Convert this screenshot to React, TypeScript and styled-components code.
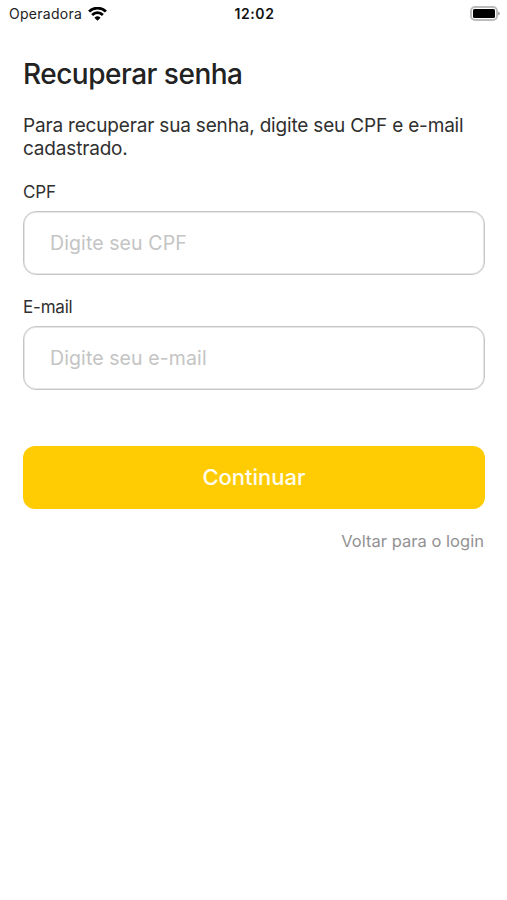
import React from "react";
import styled, { createGlobalStyle } from "styled-components";

const GlobalStyle = createGlobalStyle`
  * { box-sizing: border-box; }
  body { margin: 0; background: #fff; font-family: Inter, "Liberation Sans", sans-serif; color: #303030; }
`;

const Screen = styled.div`
  min-height: 900px;
  background: #fff;
`;

const StatusBar = styled.header`
  height: 28px;
  padding: 0 7px 0 9px;
  display: grid;
  grid-template-columns: 1fr auto 1fr;
  align-items: center;
  font-size: 14px;
  line-height: 28px;
  color: #222;
`;

const Carrier = styled.div`
  display: flex;
  align-items: center;
  gap: 6px;
  letter-spacing: 0.28px;
`;

const Clock = styled.div`
  font-weight: 600;
  letter-spacing: 0.6px;
  color: #111;
`;

const Battery = styled.div`
  display: flex;
  justify-content: flex-end;
  padding-bottom: 2px;
`;

const Form = styled.main`
  padding: 28px 22px 0 23px;
  display: flex;
  flex-direction: column;
`;

const Title = styled.h1`
  margin: 0;
  font-size: 28px;
  line-height: 36px;
  font-weight: 500;
  letter-spacing: -0.5px;
  color: #222;
`;

const Lead = styled.p`
  margin: 22px 0 0;
  font-size: 19px;
  line-height: 23px;
  letter-spacing: -0.18px;
`;

const Field = styled.div`
  margin-top: 21px;
  display: flex;
  flex-direction: column;
`;

const Label = styled.label`
  font-size: 17px;
  line-height: 22px;
  margin-bottom: 8px;
  letter-spacing: -0.2px;
`;

const Input = styled.input`
  width: 100%;
  height: 64px;
  border: 1px solid #c6c6c6;
  border-radius: 13px;
  box-shadow: inset 0 0 0 1px #e6e6e6;
  padding: 0 26px;
  font: 400 19.5px Inter, sans-serif;
  letter-spacing: 0.1px;
  outline: none;
  &::placeholder { color: #c4c4c4; opacity: 1; }
`;

const Submit = styled.button`
  margin: 56px 0 0;
  height: 63px;
  border: 0;
  border-radius: 12px;
  padding: 0 0 2px;
  background: #ffcc04;
  color: #fffdf0;
  font: 450 22px Inter, sans-serif;
`;

const BackLink = styled.a`
  align-self: flex-end;
  margin: 21px 1px 0 0;
  font-size: 16.5px;
  line-height: 22px;
  letter-spacing: 0.03px;
  color: #929292;
`;

export default function App() {
  return (
    <Screen>
      <GlobalStyle />
      <StatusBar>
        <Carrier>
          <span>Operadora</span>
          <svg width="19" height="15" viewBox="0 0 18 14" fill="none" stroke="#000" strokeWidth="2.6">
            <path d="M1 4.2a11.4 11.4 0 0 1 16 0M3.9 7.4a7.2 7.2 0 0 1 10.2 0" />
            <path d="M9 13 6.1 10.1a4.2 4.2 0 0 1 5.8 0Z" fill="#000" stroke="none" />
          </svg>
        </Carrier>
        <Clock>12:02</Clock>
        <Battery>
          <svg width="30" height="15" viewBox="0 0 30 15">
            <rect x="1" y="1" width="26" height="13" rx="4" fill="none" stroke="#bcbcbc" strokeWidth="2" />
            <rect x="3" y="3" width="22" height="9" rx="1.5" fill="#000" />
            <path d="M28 5.5q2 .5 2 2t-2 2Z" fill="#aaa" />
          </svg>
        </Battery>
      </StatusBar>
      <Form>
        <Title>Recuperar senha</Title>
        <Lead>Para recuperar sua senha, digite seu CPF e e-mail cadastrado.</Lead>
        <Field>
          <Label htmlFor="cpf">CPF</Label>
          <Input id="cpf" placeholder="Digite seu CPF" />
        </Field>
        <Field>
          <Label htmlFor="email">E-mail</Label>
          <Input id="email" placeholder="Digite seu e-mail" />
        </Field>
        <Submit>Continuar</Submit>
        <BackLink>Voltar para o login</BackLink>
      </Form>
    </Screen>
  );
}
